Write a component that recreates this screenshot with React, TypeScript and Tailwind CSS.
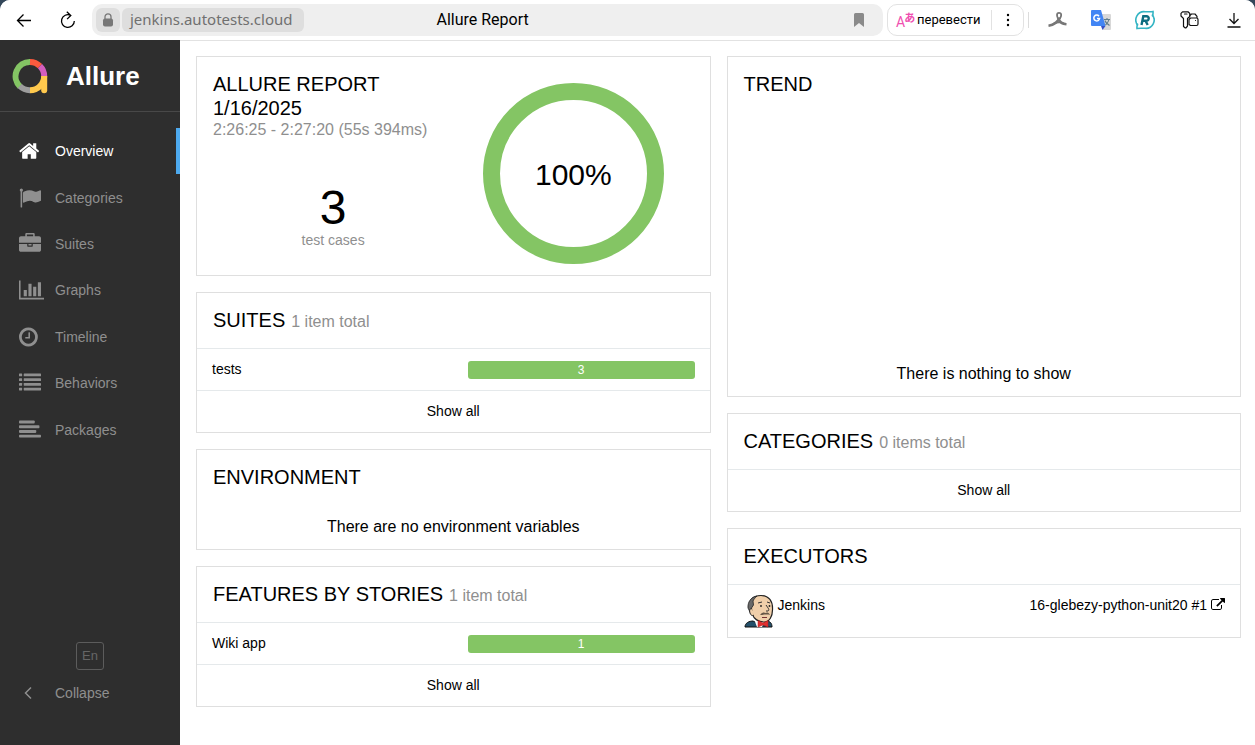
import { ReactNode } from "react";

type IconProps = { box?: string; className?: string; children: ReactNode };

function Glyph({ box = "0 0 1792 1792", className = "h-[22px]", children }: IconProps) {
  return (
    <svg viewBox={box} className={className} fill="currentColor" aria-hidden="true">
      {children}
    </svg>
  );
}

const HomeIcon = (
  <Glyph box="64 0 1664 1792">
    <path d="M1472 992v480q0 26-19 45t-45 19h-384v-384h-256v384h-384q-26 0-45-19t-19-45v-480q0-1 .5-3t.5-3l575-474 575 474q1 2 1 6zm223-69l-62 74q-8 9-21 11h-3q-13 0-21-7l-692-577-692 577q-12 8-24 7-13-2-21-11l-62-74q-8-10-7-23.5t11-21.5l719-599q32-26 76-26t76 26l244 204v-195q0-14 9-23t23-9h192q14 0 23 9t9 23v408l219 182q10 8 11 21.5t-7 23.5z" />
  </Glyph>
);
const FlagIcon = (
  <Glyph>
    <path d="M320 256q0 72-64 110v1266q0 13-9.5 22.5t-22.5 9.5h-64q-13 0-22.5-9.5t-9.5-22.5v-1266q-64-38-64-110 0-53 37.5-90.5t90.5-37.5 90.5 37.5 37.5 90.5zm1472 64v763q0 25-12.5 38.5t-39.5 27.5q-215 116-369 116-61 0-123.5-22t-108.5-48-115.5-48-142.5-22q-192 0-464 146-17 9-33 9-26 0-45-19t-19-45v-742q0-32 31-55 21-14 79-43 236-120 421-120 107 0 200 29t219 88q38 19 88 19 54 0 117.5-21t110-47 88-47 54.5-21q26 0 45 19t19 45z" />
  </Glyph>
);
const BriefcaseIcon = (
  <Glyph>
    <path d="M640 256h512v-128h-512v128zm1152 640v480q0 66-47 113t-113 47h-1472q-66 0-113-47t-47-113v-480h672v160q0 26 19 45t45 19h320q26 0 45-19t19-45v-160h672zm-768 0v128h-256v-128h256zm768-480v384h-1792v-384q0-66 47-113t113-47h352v-160q0-40 28-68t68-28h576q40 0 68 28t28 68v160h352q66 0 113 47t47 113z" />
  </Glyph>
);
const ChartIcon = (
  <Glyph box="0 0 2048 1792">
    <path d="M640 896v512h-256v-512h256zm384-512v1024h-256v-1024h256zm1024 1152v128h-2048v-1536h128v1408h1920zm-640-896v768h-256v-768h256zm384-384v1152h-256v-1152h256z" />
  </Glyph>
);
const ClockIcon = (
  <Glyph box="128 0 1536 1792">
    <path d="M1024 544v448q0 14-9 23t-23 9h-320q-14 0-23-9t-9-23v-64q0-14 9-23t23-9h224v-352q0-14 9-23t23-9h64q14 0 23 9t9 23zm416 352q0-148-73-273t-198-198-273-73-273 73-198 198-73 273 73 273 198 198 273 73 273-73 198-198 73-273zm224 0q0 209-103 385.5t-279.5 279.5-385.5 103-385.5-103-279.5-279.5-103-385.5 103-385.5 279.5-279.5 385.5-103 385.5 103 279.5 279.5 103 385.5z" />
  </Glyph>
);
const ListIcon = (
  <Glyph>
    {[128, 512, 896, 1280].map((y) => (
      <g key={y}>
        <rect x="0" y={y} width="256" height="224" rx="32" />
        <rect x="384" y={y} width="1408" height="224" rx="32" />
      </g>
    ))}
  </Glyph>
);
const AlignIcon = (
  <Glyph>
    <rect x="0" y="128" width="1280" height="236" rx="64" />
    <rect x="0" y="512" width="1664" height="236" rx="64" />
    <rect x="0" y="896" width="1408" height="236" rx="64" />
    <rect x="0" y="1280" width="1792" height="236" rx="64" />
  </Glyph>
);

const navItems = [
  { label: "Overview", icon: HomeIcon },
  { label: "Categories", icon: FlagIcon },
  { label: "Suites", icon: BriefcaseIcon },
  { label: "Graphs", icon: ChartIcon },
  { label: "Timeline", icon: ClockIcon },
  { label: "Behaviors", icon: ListIcon },
  { label: "Packages", icon: AlignIcon },
];

function BrowserBar() {
  return (
    <header className="flex h-[41px] shrink-0 items-center border-b border-[#e2e2e2] bg-white font-[Roboto,sans-serif] text-black">
      <button aria-label="Back" className="ml-4 flex size-4 items-center">
        <svg viewBox="0 0 16 16" className="size-4" fill="none" stroke="currentColor" strokeWidth="1.3">
          <path d="M15 8.500H1.500M7.500 2.500l-6 6 6 6" />
        </svg>
      </button>
      <button aria-label="Reload" className="ml-7 flex size-4 items-center">
        <svg viewBox="0 0 16 18" className="h-[18px] w-4" fill="none" stroke="currentColor" strokeWidth="1.3">
          <path d="M10.500 4.200A6.400 6.400 0 1 0 14.300 10M6.800 0.800l4 3.600-3.700 3.700" />
        </svg>
      </button>
      <div className="ml-4 flex h-8 flex-1 items-center rounded-[10px] bg-[#efefef] pl-1 pr-4">
        <button aria-label="Site security" className="flex h-6 w-6 items-center justify-center rounded-md bg-[#dedede] text-[#777]">
          <svg viewBox="0 0 12 14" className="h-[14px] w-3">
            <path d="M3 6V3.800a3 3 0 0 1 6 0V6" fill="none" stroke="currentColor" strokeWidth="1.300" />
            <rect x="1" y="5.500" width="10" height="8" rx="2" fill="currentColor" />
          </svg>
        </button>
        <div className="ml-[2px] flex h-6 items-center rounded-md bg-[#dedede] pr-3 pl-2 font-['Noto_Sans',sans-serif] text-[15px] text-[#707070]">
          jenkins.autotests.cloud
        </div>
        <div className="flex-1 pl-[132px] text-[16px]">Allure Report</div>
        <button aria-label="Bookmark" className="text-[#8a8a8a]">
          <svg viewBox="0 0 16 16" className="size-4" fill="currentColor">
            <path d="M4.500 1h7a1.500 1.500 0 0 1 1.500 1.500V15l-5-4-5 4V2.500A1.500 1.500 0 0 1 4.500 1z" />
          </svg>
        </button>
      </div>
      <div className="ml-1 flex h-8 w-[137px] items-center rounded-[10px] border border-[#e2e2e2] pl-2">
        <button className="flex items-center gap-[2px] text-[13px]">
          <span className="flex w-[19px] items-center text-[#ef4fb0]" aria-hidden="true">
            <span className="mt-1 text-[14px] leading-4">A</span>
            <span className="-ml-px mb-[6px] font-['Noto_Sans_CJK_JP',sans-serif] text-[11px] font-bold leading-3">あ</span>
          </span>
          перевести
        </button>
        <span className="ml-auto h-5 w-px bg-[#e2e2e2]" />
        <button aria-label="More" className="flex w-[31px] justify-center">
          <svg viewBox="0 0 4 14" className="h-[14px] w-1" fill="currentColor">
            <circle cx="2" cy="2" r="1.200" />
            <circle cx="2" cy="7" r="1.200" />
            <circle cx="2" cy="12" r="1.200" />
          </svg>
        </button>
      </div>
      <span className="ml-1 h-4 w-px bg-[#dcdcdc]" />
      <button aria-label="Acrobat" className="ml-[18px]">
        <svg viewBox="0 0 20 18" className="h-[18px] w-5" fill="none" stroke="#777">
          <path d="M11.500 8C9.500 5.500 9.300 1.800 12 1.800S15 5 12.500 8" strokeWidth="1.800" />
          <path d="M12.800 6.500C12 10 7 14 1.500 14.800M11 7C12.500 11 15.500 13 19.500 13.300" strokeWidth="2.600" />
          <path d="M6 13C10 11.300 14 11.300 17 12.500" strokeWidth="1.500" />
        </svg>
      </button>
      <button aria-label="Google Translate" className="ml-6">
        <svg viewBox="0 0 20 20" className="size-5">
          <path d="M7 4h12a1 1 0 0 1 1 1v14a1 1 0 0 1-1 1h-7z" fill="#d8d8d8" />
          <path d="M1 0h9l4.500 16H1a1 1 0 0 1-1-1V1a1 1 0 0 1 1-1z" fill="#4285f4" />
          <path d="M10 16h4.500L11.500 20z" fill="#3451c7" />
          <path d="M8 6.200A2.900 2.900 0 1 0 8.600 8.500H6" fill="none" stroke="#fff" strokeWidth="1.500" />
          <path d="M13 9.500h6M16 8v1.500M18 9.500c-.5 2.500-2 4-3.500 5.500M14 10.500c.5 2 2.500 3.500 4.500 5" fill="none" stroke="#607d8b" strokeWidth="1.100" />
        </svg>
      </button>
      <button aria-label="Rewriter" className="ml-6">
        <svg viewBox="0 0 20 20" className="size-5" fill="none">
          <path d="M3 15.500A8.300 8.300 0 0 1 10 1.700c3 0 5.500.3 8-.2.300 1.500-.2 3.500-.5 5" stroke="#35b5c4" strokeWidth="1.600" />
          <path d="M17 4.500A8.300 8.300 0 0 1 10 18.300c-3 0-5.500-.3-8 .2-.3-1.500.2-3.500.5-5" stroke="#35b5c4" strokeWidth="1.600" />
          <path d="M6.500 15L8.300 6.200h3.200c3.200 0 2.800 4.600-.3 4.600H8M10.500 10.800l2.200 4.200" stroke="#0e6d80" strokeWidth="2.400" />
        </svg>
      </button>
      <button aria-label="Passwords" className="ml-[25px]">
        <svg viewBox="0 0 19 18" className="h-[18px] w-[19px]" fill="none" stroke="#111" strokeWidth="1.200" strokeLinejoin="round" strokeLinecap="round">
          <path d="M2.500 .8h5.500L9.800 2.500v3L7.500 7.500v7.500L6 16.800h-1L3.500 15.500V7.500L1 5V2.300z" />
          <path d="M4.500 3h2.500" />
          <path d="M10 4.300l1.500-1.300h3.500l2 2.300v1.500M9 8.500L10.500 7H16.500a1.500 1.500 0 0 1 1.500 1.500v4.500a1.500 1.500 0 0 1-1.500 1.500H10.500L9 13.500zM15.500 9.500v0" />
        </svg>
      </button>
      <button aria-label="Downloads" className="ml-7 mr-[14px]">
        <svg viewBox="0 0 14 16" className="h-4 w-[14px]" fill="none" stroke="#111" strokeWidth="1.300">
          <path d="M7 1v10.500M2.500 7L7 11.500 11.500 7M.5 15h13" />
        </svg>
      </button>
    </header>
  );
}

function AllureLogo() {
  return (
    <svg viewBox="0 0 36 36" className="size-9" fill="none" strokeWidth="6" aria-hidden="true">
      <path d="M8 28.500A14.200 14.200 0 0 1 18 4" stroke="#84c564" />
      <path d="M18 4A14.200 14.200 0 0 1 28 8.200" stroke="#fd5a3e" />
      <path d="M28 8.200A14.200 14.200 0 0 1 32.200 18" stroke="#d35ebe" />
      <path d="M18 32.200A14.200 14.200 0 0 1 7.800 28" stroke="#9d9d9d" />
      <path d="M18 32.200A14.200 14.200 0 0 0 32.200 18" stroke="#ffc94d" />
      <path d="M29.200 18h6v14.200a3 3 0 0 1-6 0z" fill="#ffc94d" stroke="none" />
    </svg>
  );
}

function Sidebar() {
  return (
    <aside className="flex w-[180px] shrink-0 flex-col bg-[#2e2e2e] text-sm text-[#8f8f8f]">
      <div className="flex h-[72px] items-center gap-[18px] border-b border-[#484848] pl-3 text-white">
        <AllureLogo />
        <span className="pt-[2px] text-[26px] font-bold">Allure</span>
      </div>
      <nav className="mt-4 flex h-[325px] flex-col">
        {navItems.map((item, i) => (
          <a
            key={item.label}
            href={`#${item.label.toLowerCase()}`}
            className={
              i === 0
                ? "flex flex-1 items-center border-r-4 border-[#4da9ee] pl-[19px] text-white"
                : "flex flex-1 items-center pl-[19px]"
            }
          >
            <span className="w-9">{item.icon}</span>
            {item.label}
          </a>
        ))}
      </nav>
      <div className="mt-auto flex flex-col pb-[42px]">
        <button className="size-7 self-center rounded-[3px] border border-[#5c5c5c] text-[13px] text-[#666]">En</button>
        <button className="mt-[13px] flex h-5 items-center pl-6">
          <svg viewBox="0 0 8 14" className="h-[14px] w-2" fill="none" stroke="currentColor" strokeWidth="1.500">
            <path d="M7 1.500L1.500 7 7 12.500" />
          </svg>
          <span className="pl-[23px]">Collapse</span>
        </button>
      </div>
    </aside>
  );
}

function Card({ title, note, children }: { title: string; note?: string; children: ReactNode }) {
  return (
    <section className="border border-[#dfdfdf] bg-white">
      <h2 className="flex items-baseline gap-[6px] px-4 pt-[15px] pb-4 text-xl leading-6">
        {title}
        {note && <span className="text-base leading-4 text-[#8f8f8f]">{note}</span>}
      </h2>
      {children}
    </section>
  );
}

function BarRow({ name, count }: { name: string; count: number }) {
  return (
    <a href={`#${name}`} className="flex h-[42px] items-center border-t border-[#e5e9eb] px-[15px]">
      <span className="flex-1 pb-px">{name}</span>
      <span className="h-[18px] w-[47%] rounded-[3px] bg-[#84c564] text-center text-xs leading-[18px] text-white">{count}</span>
    </a>
  );
}

function ShowAll() {
  return (
    <a href="#all" className="flex h-[42px] items-center justify-center border-t border-[#e5e9eb] pb-px">
      Show all
    </a>
  );
}

function JenkinsIcon() {
  return (
    <svg viewBox="0 0 30 34" className="h-[34px] w-[30px]" aria-hidden="true">
      <path d="M1 33c0-4 4-6 8-6l6 3 7-3c4 0 6 2 6 6z" fill="#24506a" stroke="#111" />
      <path d="M10 25l3 8h5l3-7z" fill="#fff" />
      <path d="M6 16C4 6 9 1.500 17 1.500S29 7 28.500 16c0 6-3 12-8 12-6 0-11-3-12-8z" fill="#f0cfaa" stroke="#222" strokeWidth="1.200" />
      <path d="M13 2C7 3 3.500 8 4 14l2 4 2-1-.5-3 2-3-.5-4c1-2 2-3 4-5z" fill="#686868" stroke="#222" strokeWidth=".8" />
      <path d="M8 15c-2-1-3 1-2 4s3 3 4 2" fill="#f0cfaa" stroke="#222" />
      <path d="M14 9l4-1M23 8l3 1M22 11c2 3 4 5 2 6h-2" fill="none" stroke="#333" strokeWidth="1" />
      <circle cx="17" cy="12" r=".9" fill="#222" />
      <circle cx="25.500" cy="12" r=".9" fill="#222" />
      <path d="M16 21c2-3 4-3 6-2 2-1 3 0 4 2-3-1-7 0-10 0z" fill="#665747" />
      <path d="M18 23.500h5" stroke="#733" />
      <path d="M14 26.500l5 2.500 5-2.500V33l-5-2-5 2z" fill="#e03030" stroke="#b01818" strokeWidth=".5" />
    </svg>
  );
}

function Summary() {
  return (
    <section className="grid h-[220px] grid-cols-2 border border-[#dfdfdf] bg-white px-4">
      <div className="pt-[15px]">
        <h2 className="text-xl leading-6">
          ALLURE REPORT
          <br />
          1/16/2025
        </h2>
        <p className="whitespace-nowrap text-base leading-5 text-[#8f8f8f]">2:26:25 - 2:27:20 (55s 394ms)</p>
        <div className="mt-11 text-center">
          <div className="text-[48px] leading-[48px]">3</div>
          <div className="leading-4 text-[#8f8f8f]">test cases</div>
        </div>
      </div>
      <div className="flex justify-center pt-[26px]">
        <div className="flex size-[181px] items-center justify-center rounded-full border-[17px] border-[#84c564] pt-1 text-[30px]">
          100%
        </div>
      </div>
    </section>
  );
}

export default function App() {
  return (
    <div className="bg-[#34475a]">
      <div className="flex min-h-screen flex-col overflow-hidden rounded-t-[10px] bg-white font-['Liberation_Sans',Arial,sans-serif] text-sm text-black">
        <BrowserBar />
        <div className="-mt-px flex flex-1">
          <Sidebar />
          <main className="grid flex-1 grid-cols-2 items-start gap-4 pt-4 pr-[14px] pb-4 pl-4">
            <div className="flex flex-col gap-4">
              <Summary />
              <Card title="SUITES" note="1 item total">
                <BarRow name="tests" count={3} />
                <ShowAll />
              </Card>
              <Card title="ENVIRONMENT">
                <p className="pt-[10px] pb-[11px] text-center text-base leading-[23px]">There are no environment variables</p>
              </Card>
              <Card title="FEATURES BY STORIES" note="1 item total">
                <BarRow name="Wiki app" count={1} />
                <ShowAll />
              </Card>
            </div>
            <div className="flex flex-col gap-4">
              <Card title="TREND">
                <p className="flex h-[284px] items-end justify-center pb-[11px] text-base leading-[23px]">There is nothing to show</p>
              </Card>
              <Card title="CATEGORIES" note="0 items total">
                <ShowAll />
              </Card>
              <Card title="EXECUTORS">
                <div className="flex h-[53px] items-start border-t border-[#e5e9eb] pt-[9px] pr-[15px] pl-4">
                  <JenkinsIcon />
                  <span className="flex-1 pl-1 leading-[22px]">Jenkins</span>
                  <a href="#executor" className="flex items-center gap-1 leading-[22px]">
                    16-glebezy-python-unit20 #1
                    <Glyph className="size-[14px]">
                      <path d="M1408 928v320q0 119-84.5 203.5t-203.5 84.5h-832q-119 0-203.500-84.500t-84.500-203.500v-832q0-119 84.500-203.500t203.500-84.500h704q14 0 23 9t9 23v64q0 14-9 23t-23 9h-704q-66 0-113 47t-47 113v832q0 66 47 113t113 47h832q66 0 113-47t47-113v-320q0-14 9-23t23-9h64q14 0 23 9t9 23zm384-864v512q0 26-19 45t-45 19-45-19l-176-176-652 652q-10 10-23 10t-23-10l-114-114q-10-10-10-23t10-23l652-652-176-176q-19-19-19-45t19-45 45-19h512q26 0 45 19t19 45z" />
                    </Glyph>
                  </a>
                </div>
              </Card>
            </div>
          </main>
        </div>
      </div>
    </div>
  );
}
